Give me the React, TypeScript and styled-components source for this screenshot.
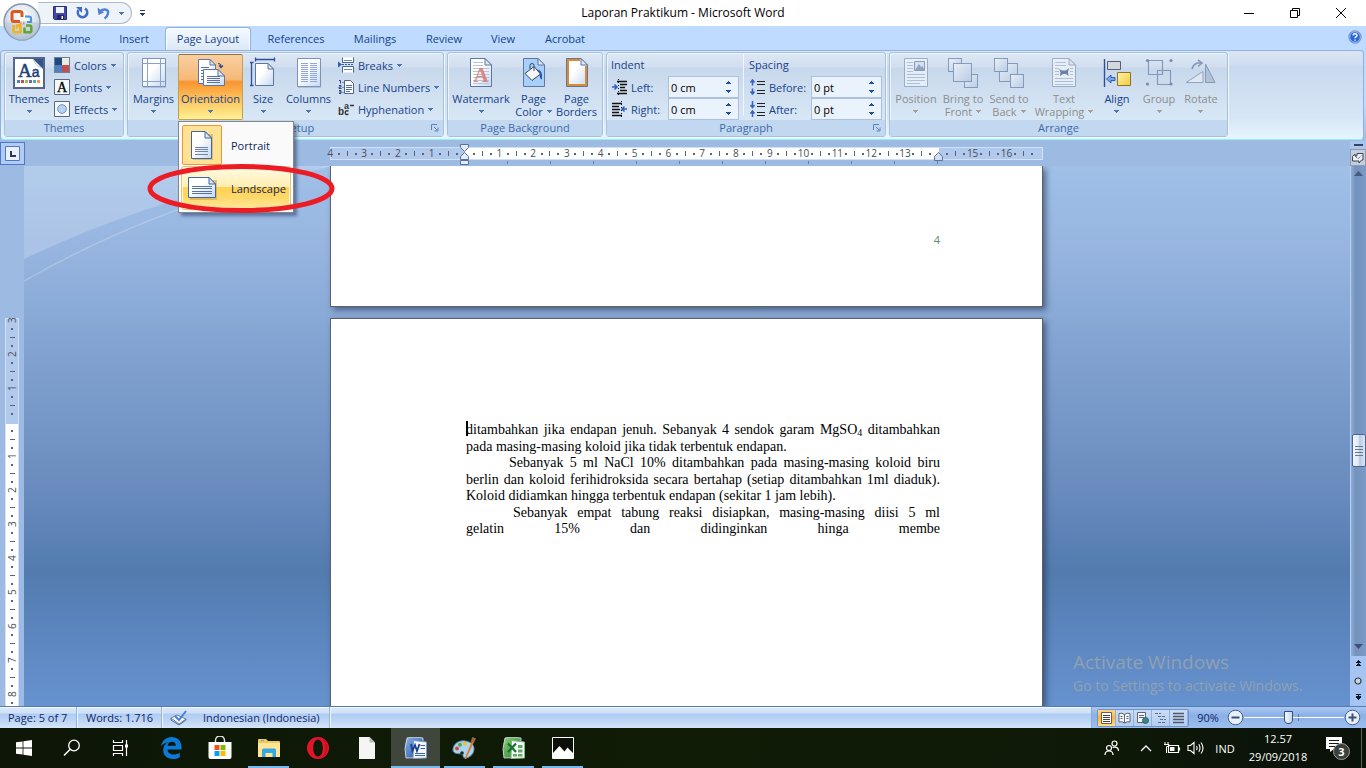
import React from 'react';
import styled, { createGlobalStyle, css } from 'styled-components';

const UI = '"Open Sans", "Segoe UI", sans-serif';
const NAVY = '#15428b';

const GlobalStyle = createGlobalStyle`
  *, *::before, *::after { box-sizing: border-box; }
  body { margin: 0; background: #0f1a08; font-family: ${UI}; font-size: 11px; color: ${NAVY}; }
  button, input { font: inherit; color: inherit; }
  button { background: none; border: 0; padding: 0; margin: 0; }
  svg { display: block; flex: none; }
`;

const Window = styled.div`
  display: flex;
  flex-direction: column;
  height: 100vh;
  min-height: 480px;
  overflow: hidden;
  position: relative;
`;

/* ---------- title bar ---------- */
const TitleBar = styled.header`
  flex: none;
  display: grid;
  grid-template-columns: 1fr auto 1fr;
  align-items: center;
  height: 26px;
  background: #fff;
  color: #000;
`;
const TitleLeft = styled.div`
  display: flex;
  align-items: center;
  height: 26px;
  padding-left: 38px;
`;
const QuickBar = styled.div`
  display: flex;
  align-items: center;
  gap: 8px;
  height: 22px;
  padding: 0 7px 0 14px;
  background: #eef3fa;
  border: 1px solid #aeb9c9;
  border-left-color: transparent;
  border-radius: 0 11px 11px 0;
`;
const QuickButton = styled.button`
  display: flex;
  align-items: center;
  justify-content: center;
  height: 18px;
`;
const MoreButton = styled(QuickButton)`
  width: 20px;
`;
const Title = styled.h1`
  margin: 0;
  font-size: 12px;
  font-weight: 400;
  line-height: 26px;
`;
const WindowButtons = styled.div`
  display: flex;
  justify-content: flex-end;
  padding-right: 2px;
`;
const WindowButton = styled.button`
  display: flex;
  align-items: center;
  justify-content: center;
  width: 46px;
  height: 24px;
`;
const OrbButton = styled.button`
  position: absolute;
  left: 3px;
  top: 3px;
  z-index: 3;
`;

/* ---------- tabs ---------- */
const TabRow = styled.nav`
  flex: none;
  display: flex;
  align-items: flex-end;
  height: 24px;
  padding: 0 4px 0 46px;
  background: #bfdbff;
`;
const Tab = styled.button<{ $w: number; $on?: boolean }>`
  width: ${p => p.$w}px;
  height: 23px;
  margin: 0 1px;
  line-height: 23px;
  white-space: nowrap;
  ${p => p.$on && css`
    border: 1px solid #8db2e3;
    border-bottom: 0;
    border-radius: 4px 4px 0 0;
    background: linear-gradient(#f4f9ff, #dce8f6);
    line-height: 22px;
    box-shadow: inset 1px 1px 0 #fff, inset -1px 0 0 #fff;
  `}
`;
const HelpButton = styled.button`
  margin: 0 0 6px auto;
`;

/* ---------- ribbon ---------- */
const Ribbon = styled.div`
  flex: none;
  display: flex;
  gap: 3px;
  height: 90px;
  margin: 0 2px 0 0;
  padding: 1px 2px 2px 3px;
  border: 1px solid #8db2e3;
  border-bottom: 1px solid #8ff0fb;
  border-radius: 4px;
  background: linear-gradient(#dbe6f4 0, #cfddef 16%, #c9d9ed 17%, #d6e6f6 75%, #e7f5ff 100%);
`;
const RibbonShell = styled.div`
  flex: none;
  background: linear-gradient(#bfdbff 60%, #9ebbe0);
  padding-bottom: 1px;
`;
const Group = styled.section<{ $w: number }>`
  display: flex;
  flex-direction: column;
  width: ${p => p.$w}px;
  border: 1px solid #a5c2de;
  border-radius: 3px;
  box-shadow: inset 1px 1px 0 #ecf3fb, 1px 1px 0 #eff6fd;
  background: linear-gradient(#dde8f5 0, #d1deef 17%, #c8d8ec 18%, #d8e7f5 80%);
`;
const GroupBody = styled.div`
  flex: 1;
  display: flex;
  padding: 1px 2px 0;
`;
const GroupTitle = styled.h2`
  position: relative;
  margin: 0;
  height: 16px;
  font-size: 11px;
  font-weight: 400;
  line-height: 16px;
  text-align: center;
  color: #3e6aaa;
  background: #c1d8f0;
`;
const Launcher = styled.button`
  position: absolute;
  right: 4px;
  top: 4px;
`;
const BigButton = styled.button<{ $w: number; $state?: 'open' | 'off' }>`
  display: flex;
  flex-direction: column;
  align-items: center;
  flex: none;
  width: ${p => p.$w}px;
  height: 66px;
  padding-top: 3px;
  line-height: 13px;
  white-space: nowrap;
  ${p => p.$state === 'off' && css`
    color: #8d8d8d;
    & > svg:first-child { opacity: 0.75; }
  `}
  ${p => p.$state === 'open' && css`
    padding-top: 2px;
    border: 1px solid #c2a04c;
    border-top-color: #8e6f44;
    border-radius: 2px;
    background: linear-gradient(#f9cfa0 0, #f6b978 38%, #f8942f 42%, #fbb752 62%, #fde583 92%, #fff0a0 100%);
  `}
`;
const BigLabel = styled.span`
  margin-top: 3px;
  display: flex;
  flex-direction: column;
  align-items: center;
`;
const LabelLine = styled.span`
  display: flex;
  align-items: center;
  justify-content: center;
  gap: 4px;
  height: 13px;
`;
const SmallStack = styled.div`
  display: flex;
  flex-direction: column;
  margin-left: 3px;
`;
const SmallButton = styled.button`
  display: flex;
  align-items: center;
  gap: 4px;
  height: 22px;
  white-space: nowrap;
`;
const MenuAnchor = styled.div`
  position: relative;
  margin: 0 1px;
`;
const Menu = styled.div`
  position: absolute;
  left: 0;
  top: 67px;
  z-index: 5;
  width: 116px;
  height: 92px;
  padding: 2px;
  border: 1px solid #868686;
  background: #fafafa;
  box-shadow: 3px 3px 3px rgba(30, 50, 90, 0.5);
  color: #0d1f63;
`;
const MenuItem = styled.button<{ $hot?: boolean }>`
  display: flex;
  align-items: center;
  gap: 9px;
  width: 100%;
  height: ${p => (p.$hot ? 44 : 42)}px;
  padding: 0;
  ${p => p.$hot && css`
    border: 1px solid #d9c48a;
    border-radius: 3px;
    box-shadow: inset 0 0 0 1px #fff6d2;
    background: linear-gradient(#fffbe4 0, #ffeeb0 47%, #ffd24f 49%, #ffd766 70%, #ffe79c 100%);
  `}
`;
const MenuIcon = styled.span<{ $on?: boolean }>`
  display: flex;
  align-items: center;
  justify-content: center;
  width: 40px;
  height: 40px;
  margin-left: ${p => (p.$on ? 1 : 0)}px;
  ${p => p.$on && css`
    border: 1px solid #f29536;
    border-radius: 2px;
    background: #ffe294;
  `}
`;
const Callout = styled.svg`
  position: absolute;
  left: -32px;
  top: 109px;
  z-index: 6;
  pointer-events: none;
`;

/* ---------- paragraph fields ---------- */
const FieldColumn = styled.div<{ $rule?: boolean }>`
  padding: 0 ${p => (p.$rule ? 4 : 0)}px 0 2px;
  margin-right: ${p => (p.$rule ? 3 : 0)}px;
  height: 62px;
  border-right: ${p => (p.$rule ? '1px solid #eef5fd' : '0')};
`;
const FieldHead = styled.div`
  height: 22px;
  line-height: 22px;
`;
const FieldRow = styled.label<{ $w: number }>`
  display: grid;
  grid-template-columns: 20px ${p => p.$w}px 71px;
  align-items: center;
  height: 22px;
`;
const Spinner = styled.span`
  display: flex;
  align-items: center;
  height: 22px;
  border: 1px solid #abc1de;
  background: #eaf2fb;
`;
const FieldInput = styled.input`
  width: 57px;
  height: 18px;
  padding: 0 0 0 2px;
  border: 0;
  background: none;
  color: #000;
  outline: none;
`;

/* ---------- workspace ---------- */
const Workspace = styled.main`
  flex: 1;
  min-height: 0;
  display: grid;
  grid-template-columns: 24px 1fr 16px;
  grid-template-rows: 25px 1fr;
  background: #9cbae2;
`;
const TabStop = styled.button`
  display: flex;
  align-items: center;
  justify-content: center;
  width: 25px;
  height: 23px;
  margin-top: 1px;
  border: 1px solid #4b79cd;
  background: #b3cbee;
`;
const HRulerWrap = styled.div`
  display: flex;
  flex-direction: column;
  align-items: center;
  padding: 6px 1px 0 0;
`;
const HRuler = styled.div`
  position: relative;
  width: 713px;
  height: 13px;
  border: 1px solid #cfe0f7;
  background: linear-gradient(90deg, #b0c9ec 134px, #fff 134px, #fff 608px, #b0c9ec 608px);
`;
const HCells = styled.div`
  display: grid;
  grid-template-columns: repeat(84, 1fr);
  height: 11px;
  margin: 0 6px 0 -5px;
`;
const Cell = styled.span`
  display: flex;
  align-items: center;
  justify-content: center;
  width: 0;
  justify-self: center;
  font-size: 10px;
  line-height: 11px;
  color: #4b4f57;
`;
const Dot = styled.i`
  flex: none;
  width: 2px;
  height: 2px;
  background: #5c6470;
`;
const Tick = styled.i<{ $v?: boolean }>`
  flex: none;
  width: ${p => (p.$v ? 5 : 1)}px;
  height: ${p => (p.$v ? 1 : 5)}px;
  background: #5c6470;
`;
const StopRow = styled.div`
  display: grid;
  grid-template-columns: repeat(11, 1fr);
  width: 474px;
  height: 3px;
  margin-left: 30px;
  margin-top: 1px;
`;
const Stop = styled.i`
  border-right: 1px solid #6d7f9e;
`;
const Marker = styled.svg<{ $x: number; $y: number }>`
  position: absolute;
  left: ${p => p.$x}px;
  top: ${p => p.$y}px;
`;
const SplitCell = styled.div`
  display: flex;
  flex-direction: column;
  align-items: center;
  gap: 3px;
  padding-top: 3px;
  background: #a9c6f0;
`;
const SplitBar = styled.i`
  width: 9px;
  height: 2px;
  background: #3b4260;
`;
const ObjectButton = styled.button`
  display: flex;
  align-items: center;
  justify-content: center;
  width: 16px;
  height: 17px;
  border: 1px solid #8d9bb3;
  background: #c6ccd8;
`;
const VRulerWrap = styled.div`
  overflow: hidden;
  min-height: 0;
  padding: 152px 5px 0;
`;
const VRuler = styled.div`
  height: 600px;
  padding: 0;
  border: 1px solid #cfe0f7;
  background: linear-gradient(#b0c9ec 105px, #fff 105px);
`;
const VUnit = styled.div`
  display: grid;
  grid-template-rows: repeat(4, 1fr);
  height: 34px;
  margin-top: -3px;
  margin-bottom: 3px;
  justify-items: center;
  align-items: center;
`;
const VNumber = styled.span`
  height: 8px;
  font-size: 10px;
  line-height: 8px;
  color: #4b4f57;
  writing-mode: vertical-rl;
  transform: rotate(180deg);
  display: flex;
  align-items: center;
  justify-content: center;
`;
const Canvas = styled.div`
  position: relative;
  min-height: 0;
  overflow: hidden;
  display: flex;
  flex-direction: column;
  align-items: center;
  gap: 11px;
  padding-right: 1px;
  background: linear-gradient(#a0c0e8 0, #96b4df 16%, #84a5d3 32%, #6d8fc0 56%, #6487ba 64%, #537bae 75%, #5a84bc 85%, #6692cf 100%);
`;
const Swoosh = styled.svg`
  position: absolute;
  left: 0;
  top: 0;
`;
const Page = styled.article<{ $tail?: boolean }>`
  position: relative;
  flex: ${p => (p.$tail ? 'none' : '1 0 388px')};
  width: 713px;
  padding: ${p => (p.$tail ? '66px 102px 58px' : '102px 102px 0 135px')};
  border: 1px solid #5e6066;
  border-top: ${p => (p.$tail ? '0' : '1px solid #5e6066')};
  border-bottom: ${p => (p.$tail ? '1px solid #5e6066' : '0')};
  background: #fff;
  box-shadow: 3px 3px 6px rgba(30, 50, 80, 0.6);
`;
const Folio = styled.p`
  margin: 0;
  font-size: 11px;
  line-height: 16px;
  text-align: right;
  color: #5b8a72;
`;
const Line = styled.p<{ $indent?: number; $natural?: boolean }>`
  margin: 0;
  padding-left: ${p => p.$indent || 0}px;
  height: 17px;
  font-family: "Liberation Serif", "Times New Roman", serif;
  font-size: 14px;
  line-height: 17px;
  white-space: nowrap;
  color: #000;
  text-align: ${p => (p.$natural ? 'left' : 'justify')};
  text-align-last: ${p => (p.$natural ? 'left' : 'justify')};
  &:nth-of-type(even) { height: 16px; }
`;
const Sub = styled.sub`
  font-size: 10px;
  line-height: 0;
  vertical-align: -2px;
`;
const Caret = styled.i`
  position: absolute;
  left: 135px;
  top: 102px;
  width: 2px;
  height: 15px;
  background: #000;
`;
const Activation = styled.aside`
  position: absolute;
  right: 0;
  bottom: 9px;
  width: 277px;
  color: #9aa5ad;
  opacity: 0.85;
  font-size: 14px;
  line-height: 23px;
  white-space: nowrap;
`;
const ActivationHead = styled.p`
  margin: 0;
  font-size: 19px;
`;
const ActivationText = styled.p`
  margin: 0;
`;
const Scroll = styled.div`
  display: flex;
  flex-direction: column;
  min-height: 0;
`;
const Track = styled.div`
  flex: 1;
  display: flex;
  flex-direction: column;
  justify-content: space-between;
  align-items: center;
  padding: 5px 0 7px;
  border-left: 1px solid #b5cdef;
  background: linear-gradient(90deg, #8fadd6, #7393bd 30%, #7b9ac6);
`;
const Thumb = styled.div`
  display: flex;
  flex-direction: column;
  justify-content: center;
  align-items: center;
  gap: 2px;
  width: 14px;
  height: 33px;
  margin-top: 81px;
  border: 1px solid #4f6596;
  border-radius: 2px;
  background: linear-gradient(90deg, #f2f6fb, #dfe8f3 45%, #b9cbe2 55%, #dbe6f3);
`;
const Grip = styled.i`
  width: 8px;
  height: 1px;
  background: #68788f;
`;
const BrowseKeys = styled.div`
  display: flex;
  flex-direction: column;
  align-items: center;
  justify-content: space-between;
  height: 50px;
  padding: 4px 0 5px;
  background: #a5c4f1;
`;

/* ---------- status bar ---------- */
const StatusBar = styled.footer`
  flex: none;
  display: flex;
  align-items: center;
  height: 22px;
  border-top: 1px solid #567db1;
  box-shadow: inset 0 1px 0 #f4f9ff;
  background: linear-gradient(#dbe8fa 0, #cfe0f8 30%, #adcbf2 32%, #c3d9f6 75%, #d6e5fa 100%);
  color: #0f2668;
  white-space: nowrap;
`;
const StatusItem = styled.button<{ $w: number; $pad: number }>`
  display: flex;
  align-items: center;
  gap: 16px;
  width: ${p => p.$w}px;
  height: 21px;
  padding-left: ${p => p.$pad}px;
  border-right: 1px solid #94b3df;
  box-shadow: 1px 0 0 #eff5fe;
`;
const StatusRight = styled.div`
  display: flex;
  align-items: center;
  height: 21px;
  margin-left: auto;
  padding: 0 5px 0 5px;
  border-left: 1px solid #8aabd9;
  background: linear-gradient(#a9c8f2, #8cb1e6 40%, #9dbeee);
`;
const ViewButtons = styled.div`
  display: flex;
  height: 18px;
  border: 1px solid #6f93c8;
  border-radius: 2px;
`;
const ViewButton = styled.button<{ $on?: boolean }>`
  display: flex;
  align-items: center;
  justify-content: center;
  width: 18px;
  height: 16px;
  background: ${p => (p.$on ? 'linear-gradient(#ffd592, #ffb03d 50%, #ffe08a)' : 'linear-gradient(#c9ddf6, #b4cdf0)')};
  border-right: 1px solid #90b0de;
`;
const ZoomLabel = styled.button`
  width: 38px;
  text-align: center;
`;
const ZoomButton = styled.button`
  width: 17px;
  height: 17px;
`;
const ZoomRange = styled.input`
  appearance: none;
  width: 100px;
  height: 16px;
  margin: 0;
  background: linear-gradient(#fff, #fff) center / 100% 1px no-repeat, linear-gradient(#5d7fb4, #5d7fb4) 54px center / 1px 7px no-repeat;
  &::-webkit-slider-thumb {
    appearance: none;
    width: 9px;
    height: 13px;
    border: 1px solid #33507f;
    border-radius: 1px 1px 5px 5px;
    background: linear-gradient(90deg, #f4f8fd, #c7d8ee);
  }
`;

/* ---------- taskbar ---------- */
const Taskbar = styled.nav`
  flex: none;
  display: flex;
  height: 40px;
  background: linear-gradient(90deg, #0d1607, #101c06 50%, #0e1907 80%, #0a1109);
  color: #fff;
`;
const TaskButton = styled.button<{ $w?: number; $state?: 'running' | 'active' }>`
  display: flex;
  align-items: center;
  justify-content: center;
  width: ${p => p.$w || 49}px;
  height: 40px;
  ${p => p.$state && css`
    background: linear-gradient(#76b9ed, #76b9ed) bottom center / ${p.$state === 'active' ? 49 : 41}px 2px no-repeat
      ${p.$state === 'active' ? ', #3f463b' : ''};
  `}
`;
const Apps = styled.div`
  display: flex;
  margin-left: 2px;
`;
const Tray = styled.div`
  display: flex;
  align-items: center;
  margin-left: auto;
`;
const TrayButton = styled.button<{ $w: number }>`
  display: flex;
  align-items: center;
  justify-content: center;
  width: ${p => p.$w}px;
  height: 40px;
`;
const Clock = styled.button`
  width: 72px;
  height: 40px;
  line-height: 18px;
  text-align: center;
`;
const PeekEdge = styled.i`
  width: 5px;
  height: 40px;
  border-left: 1px solid #5c6354;
`;

/* ---------- icons ---------- */
const Down = ({ c = '#4a76b8' }: { c?: string }) => (
  <svg width="5" height="3" viewBox="0 0 5 3" shapeRendering="crispEdges"><path d="M0 0h5v1h-1v1h-1v1h-1v-1h-1v-1h-1z" fill={c} /></svg>
);

const SheetShape = ({ x = 0, y = 0, w = 22, h = 28, fold = 7, fill = 'url(#paper)', stroke = '#5f779f' }) => (
  <g transform={`translate(${x} ${y})`}>
    <path d={`M.5 .5H${w - fold}L${w - 0.5} ${fold}V${h - 0.5}H.5Z`} fill={fill} stroke={stroke} />
    <path d={`M${w - fold} .5V${fold}H${w - 0.5}Z`} fill="#dbe6f6" stroke={stroke} />
  </g>
);

const PaperDefs = () => (
  <svg width="0" height="0" style={{ position: 'absolute' }} aria-hidden="true">
    <defs>
      <linearGradient id="paper" x1="0" y1="0" x2="1" y2="1">
        <stop offset="0.4" stopColor="#fff" />
        <stop offset="1" stopColor="#c3d7f4" />
      </linearGradient>
      <linearGradient id="tile" x1="0" y1="0" x2="1" y2="1">
        <stop offset="0" stopColor="#f1f5fb" />
        <stop offset="1" stopColor="#b4c8e3" />
      </linearGradient>
      <radialGradient id="orb" cx="0.5" cy="0.35" r="0.65">
        <stop offset="0" stopColor="#fff" />
        <stop offset="0.55" stopColor="#e2e8f1" />
        <stop offset="1" stopColor="#aab9ce" />
      </radialGradient>
      <linearGradient id="gold" x1="0" y1="0" x2="1" y2="1">
        <stop offset="0" stopColor="#fff3a8" />
        <stop offset="1" stopColor="#f3ca3c" />
      </linearGradient>
      <linearGradient id="wordblue" x1="0" y1="0" x2="1" y2="1">
        <stop offset="0" stopColor="#8fb2e6" />
        <stop offset="1" stopColor="#1e4b9e" />
      </linearGradient>
      <linearGradient id="xlgreen" x1="0" y1="0" x2="1" y2="1">
        <stop offset="0" stopColor="#8fd07b" />
        <stop offset="1" stopColor="#1f7a2e" />
      </linearGradient>
    </defs>
  </svg>
);

const lines = (x1: number, x2: number, ys: number[]) => ys.map(y => `M${x1} ${y}.5H${x2}`).join('');

const OrbIcon = () => (
  <svg width="38" height="38" viewBox="0 0 38 38">
    <circle cx="19" cy="19" r="18" fill="url(#orb)" stroke="#8494ab" strokeWidth="1.4" />
    <path d="M1.8 20a17.2 17.2 0 0 0 34.4 0q-17-4-34.4 0z" fill="#b7c5d9" opacity="0.55" />
    <g fill="none" strokeLinejoin="round">
      <path d="M17 18.500H11q-2 0-2-2V10.500q0-2 2-2h6q2 0 2 2V14" stroke="#dd5a1f" strokeWidth="3" />
      <path d="M22 13.500h4q2 0 2 2V19h-4" stroke="#4b92d8" strokeWidth="2.200" />
      <path d="M10.500 22v5.500q0 1.800 1.800 1.800H17.500V22.500H14v3" stroke="#f0b31c" strokeWidth="2.600" />
      <path d="M23 22.500h3.500q1.800 0 1.800 1.800v3.200q0 1.800-1.800 1.800H21.500V24.500" stroke="#62a52f" strokeWidth="2.600" />
    </g>
    <path d="M17 20.500h1.500M20 20.500h1.500" stroke="#e8862f" strokeWidth="2" />
  </svg>
);
const SaveIcon = () => (
  <svg width="14" height="14" viewBox="0 0 14 14">
    <path d="M.5 .5h13v13H1.500l-1-1z" fill="#4348a5" stroke="#2b2f7c" />
    <path d="M3 1h8v6H3z" fill="#eef3ff" />
    <path d="M4 9h7v4.500H4z" fill="#23266a" />
    <path d="M8.500 10h1.500v3H8.500z" fill="#fff" />
  </svg>
);
const RepeatIcon = () => (
  <svg width="14" height="14" viewBox="0 0 14 14">
    <path d="M10 2.500A4.700 4.700 0 1 1 3.500 4" fill="none" stroke="#3e6cc9" strokeWidth="2.600" />
    <path d="M1 1h6v6z" fill="#3e6cc9" />
  </svg>
);
const UndoIcon = () => (
  <svg width="14" height="14" viewBox="0 0 14 14">
    <path d="M3 5.500C7 2 12 3.500 11 7.500 10.500 10 9 11.500 7.500 12.500" fill="none" stroke="#4f7fd6" strokeWidth="2.400" />
    <path d="M.5 1.500L1.500 9 7 6.500z" fill="#4f7fd6" />
  </svg>
);
const HelpIcon = () => (
  <svg width="14" height="14" viewBox="0 0 14 14">
    <circle cx="7" cy="7" r="6.300" fill="#2a66d4" stroke="#8ba6d2" />
    <circle cx="7" cy="7" r="5.300" fill="none" stroke="#cfe0fb" strokeWidth="0.700" />
    <path d="M5 5.500Q5.200 3.800 7 3.800T9 5.400Q9 6.400 7.800 7 7 7.500 7 8.300M7 9.400V10.700" fill="none" stroke="#fff" strokeWidth="1.400" />
  </svg>
);
const ThemesIcon = () => (
  <svg width="32" height="32" viewBox="0 0 32 32">
    <path d="M1 1h30v30H1z" fill="#fff" stroke="#56678a" strokeWidth="2" />
    <path d="M20 2h10v10z" fill="#34548f" />
    <path d="M21 3q1 6 8 8" fill="none" stroke="#b9cbe6" />
    <text x="5" y="20" fontFamily="Liberation Serif, serif" fontSize="19" fill="#1f3f77" stroke="#1f3f77" strokeWidth="0.500">A<tspan fontFamily="Liberation Sans, sans-serif" fontSize="14">a</tspan></text>
    {['#4f81bd', '#c0504d', '#9bbb59', '#8064a2', '#4bacc6', '#f79646'].map((c, i) => (
      <path key={c} d={`M${4 + i * 4} 23h3v3h-3z`} fill={c} />
    ))}
  </svg>
);
const ColorsIcon = () => (
  <svg width="16" height="16" viewBox="0 0 16 16" shapeRendering="crispEdges">
    <path d="M0 0h16v16H0z" fill="#6b7f9f" />
    <path d="M1 1h7v7H1z" fill="#1f497d" /><path d="M8 1h7v7H8z" fill="#eeece1" />
    <path d="M1 8h7v7H1z" fill="#4f81bd" /><path d="M8 8h7v7H8z" fill="#c0504d" />
  </svg>
);
const FontsIcon = () => (
  <svg width="16" height="16" viewBox="0 0 16 16">
    <path d="M.5 .5h15v15H.5z" fill="#f6f8fc" stroke="#56678a" />
    <text x="8" y="13" textAnchor="middle" fontFamily="Liberation Serif, serif" fontSize="14" fill="#000" stroke="#000" strokeWidth="0.300">A</text>
  </svg>
);
const EffectsIcon = () => (
  <svg width="16" height="16" viewBox="0 0 16 16">
    <path d="M.5 .5h15v15H.5z" fill="#f6f8fc" stroke="#56678a" />
    <circle cx="8" cy="8" r="4.300" fill="#b8d2f4" stroke="#6d8fca" />
  </svg>
);
const MarginsIcon = () => (
  <svg width="26" height="32" viewBox="0 0 26 32">
    <path d="M2 2h23v29H2z" fill="#8fa4c4" opacity="0.500" />
    <path d="M1.500 1.500h23v28h-23z" fill="url(#paper)" stroke="#7b93b8" />
    <path d="M6.500 2v27M19.500 2v27M2 6.500h22M2 24.500h22" stroke="#8aa3cb" />
  </svg>
);
const OrientationIcon = () => (
  <svg width="30" height="32" viewBox="0 0 30 32">
    <SheetShape x={2} y={2} w={18} h={25} fold={6} />
    <path d={lines(5, 13, [10, 13, 16, 19, 22])} stroke="#5d7098" />
    <SheetShape x={7} y={12} w={22} h={17} fold={7} />
    <path d={lines(11, 24, [19, 21, 23, 25])} stroke="#5d7098" />
    <path d="M22 6.500q3 0 3 3M23 8.500l2 2.200 2-2.200" fill="none" stroke="#2c4d85" strokeWidth="1.200" />
  </svg>
);
const SizeIcon = () => (
  <svg width="26" height="32" viewBox="0 0 26 32">
    <path d="M5.500 2.500H24M5.500 .5v4M24.500 .5v4M1.500 5V28M0 5.500h3.500M0 28.500h3.500" stroke="#2e4f9a" strokeWidth="1.300" />
    <SheetShape x={5} y={6} w={19} h={23} fold={6} />
  </svg>
);
const ColumnsIcon = () => (
  <svg width="26" height="32" viewBox="0 0 26 32">
    <path d="M2 2h23v29H2z" fill="#8fa4c4" opacity="0.500" />
    <path d="M1.500 1.500h23v28h-23z" fill="url(#paper)" stroke="#7b93b8" />
    <path d={lines(5, 12, [6, 8, 10, 12, 14, 16, 18, 20, 22, 24]) + lines(14, 21, [6, 8, 10, 12, 14, 16, 18, 20, 22, 24])} stroke="#8ea8dc" />
  </svg>
);
const BreaksIcon = () => (
  <svg width="16" height="16" viewBox="0 0 16 16">
    <path d="M4.500 .5V5.500H15.500V.5M4.500 15.500V9.500H15.500V15.500" fill="#fff" stroke="#4d648f" />
    <path d="M6 3.500h8M6 12.500h8" stroke="#6b86b8" />
    <path d="M0 4.500l4 3-4 3z" fill="#2e5cb8" /><path d="M4 7.500h12" stroke="#2e5cb8" strokeDasharray="2 1" />
  </svg>
);
const LineNumIcon = () => (
  <svg width="16" height="16" viewBox="0 0 16 16">
    <path d="M6.500 1.500h6l3 3v10h-9z" fill="#fff" stroke="#4d648f" />
    <path d="M8 6.500h6M8 8.500h6M8 10.500h6M8 12.500h4" stroke="#506fa5" />
    <path d="M1 1.500h1.500V4.500M1 6.500h2v1.500H1V9.500h2.500M1 11.500h2v3H1M1 13h2M5 3v1M5 8v1M5 13v1" fill="none" stroke="#2a4787" />
  </svg>
);
const HyphenIcon = () => (
  <svg width="16" height="16" viewBox="0 0 16 16">
    <text x="0" y="14" fontFamily="Liberation Sans, sans-serif" fontWeight="700" fontSize="10" fill="#333">b<tspan dy="-6" fontSize="9">a</tspan></text>
    <path d="M10.500 10.200q-3-1.200-3.200 1.400t3.200 1.600M12 4.500h4" fill="none" stroke="#333" strokeWidth="1.400" />
  </svg>
);
const WatermarkIcon = () => (
  <svg width="24" height="32" viewBox="0 0 24 32">
    <SheetShape x={1} y={1} w={22} h={29} />
    <path d={lines(4, 14, [5, 8]) + lines(4, 20, [11, 14, 17, 20, 23, 26])} stroke="#b9c4d8" />
    <text x="12" y="25" textAnchor="middle" fontFamily="Liberation Serif, serif" fontWeight="700" fontSize="21" fill="#d9776f" opacity="0.850">A</text>
  </svg>
);
const PageColorIcon = () => (
  <svg width="24" height="32" viewBox="0 0 24 32">
    <SheetShape x={1} y={1} w={22} h={29} fill="#a6d0fa" />
    <path d="M3 16.500l9-7 6.500 7.500-8.500 6.500z" fill="#f4f6fa" stroke="#39435a" />
    <path d="M8 12V8.500q0-2 2-2t2 2V14" fill="none" stroke="#39435a" />
    <path d="M15 12.500q6 0 5 10-3-1-2-6z" fill="#2455b5" />
  </svg>
);
const PageBordersIcon = () => (
  <svg width="24" height="32" viewBox="0 0 24 32">
    <SheetShape x={1} y={1} w={22} h={29} />
    <path d="M15 3H3V28H21V9" fill="none" stroke="#e08a2e" strokeWidth="2" />
  </svg>
);
const IndentIcon = ({ right }: { right?: boolean }) => (
  <svg width="17" height="16" viewBox="0 0 17 16">
    <path d={right ? 'M1 2.500h10M1 5.500h7M1 8.500h8M1 11.500h7M1 14.500h10' : 'M6 2.500h10M9 5.500h7M9 8.500h5M9 11.500h7M6 14.500h10'} stroke="#111" strokeWidth="1.600" />
    <path d={right ? 'M16 8H11M13.500 5.500L11 8l2.500 2.500' : 'M1 8h5M3.500 5.500L6 8 3.500 10.500'} fill="none" stroke="#2e5cc8" strokeWidth="1.500" />
    <path d={right ? 'M10.500 0v16' : 'M7.500 0v16'} stroke="#111" strokeDasharray="1 2" />
  </svg>
);
const SpacingIcon = ({ after }: { after?: boolean }) => (
  <svg width="17" height="16" viewBox="0 0 17 16">
    <path d="M8 2.500h8M8 5.500h8M8 11.500h8M8 14.500h8" stroke="#222" />
    <path d={after ? 'M3.500 0v6M1.500 4l2 2.500L5.500 4M3.500 16v-5.500M1.500 12.500l2-2.500 2 2.500' : 'M3.500 6.500V1M1.500 3.500l2-2.500 2 2.500M3.500 9.500V15M1.500 12.500l2 2.500 2-2.500'} fill="none" stroke="#3563c4" strokeWidth="1.500" />
  </svg>
);
const PositionIcon = () => (
  <svg width="26" height="32" viewBox="0 0 26 32">
    <path d="M1.500 1.500h23v28h-23z" fill="#eef3fa" stroke="#8a9cba" />
    <path d={lines(4, 10, [5, 8, 11, 14]) + lines(4, 22, [17, 20, 23]) + lines(4, 17, [26])} stroke="#a6b6d0" />
    <path d="M11.500 4.500h10v9h-10z" fill="#d5e0ef" stroke="#6f84a8" />
    <path d="M12 13l4-6 2 3 1.500-1 2 4z" fill="#7d92b5" />
  </svg>
);
const Tile = ({ x, y, s }: { x: number; y: number; s: number }) => (
  <rect x={x + 0.5} y={y + 0.5} width={s} height={s} fill="url(#tile)" stroke="#6e83a8" />
);
const FrontIcon = () => (
  <svg width="32" height="32" viewBox="0 0 32 32"><Tile x={1} y={1} s={13} /><Tile x={17} y={17} s={13} /><Tile x={6} y={6} s={18} /></svg>
);
const BackIcon = () => (
  <svg width="32" height="32" viewBox="0 0 32 32"><Tile x={6} y={6} s={18} /><Tile x={1} y={1} s={13} /><Tile x={17} y={17} s={13} /></svg>
);
const WrapIcon = () => (
  <svg width="26" height="32" viewBox="0 0 26 32">
    <SheetShape x={1} y={1} w={24} h={29} stroke="#8a9cba" fill="#eef3fa" />
    <path d={lines(4, 15, [5, 8]) + lines(4, 8, [11, 14, 17]) + lines(19, 22, [11, 14, 17]) + lines(4, 22, [21, 24, 27])} stroke="#a6b6d0" />
    <path d="M8 12l3 1.500h4l3-2.500-1 4 .5 4-2.500-2h-3l-3 2 .5-4z" fill="#4e6388" />
  </svg>
);
const AlignIcon = () => (
  <svg width="28" height="32" viewBox="0 0 28 32">
    <path d="M1.500 2V30" stroke="#2c4f9b" strokeWidth="1.400" />
    <path d="M4.500 4.500h13v8h-13z" fill="#d4d8de" stroke="#56606f" />
    <path d="M14.500 15.500h13v13h-13z" fill="url(#gold)" stroke="#8e7423" />
    <path d="M12 20.500H8v-2.500l-4.500 4 4.500 4v-2.500h4z" fill="#7fa6e6" stroke="#2e5cb8" />
  </svg>
);
const GroupIcon = () => (
  <svg width="28" height="32" viewBox="0 0 28 32">
    <path d="M3.500 3.500h14v14h-14zM12.500 13.500h13v14h-13z" fill="none" stroke="#6e83a8" strokeWidth="1.200" />
    <g fill="#5a7099"><circle cx="2.500" cy="3.500" r="1.600" /><circle cx="26" cy="3.500" r="1.600" /><circle cx="2.500" cy="27" r="1.600" /><circle cx="26" cy="27" r="1.600" /></g>
  </svg>
);
const RotateIcon = () => (
  <svg width="32" height="32" viewBox="0 0 32 32">
    <path d="M1 25.500L18 14.500V25.500z" fill="#e6ecf5" stroke="#7d90b0" />
    <path d="M20.500 7V25.500H30z" fill="#a9b9d1" stroke="#6e83a8" />
    <path d="M7 12q2-7 9-6M13 3l4 3-4 3.500" fill="none" stroke="#6e83a8" strokeWidth="1.600" />
  </svg>
);
const LaunchIcon = () => (
  <svg width="8" height="8" viewBox="0 0 8 8"><path d="M.5 6V.5H6M3 3l3 3M7 3.500V7H3.500" fill="none" stroke="#5b82b8" /></svg>
);
const PortraitIcon = () => (
  <svg width="24" height="30" viewBox="0 0 24 30">
    <path d="M3 4h20v26H3z" fill="#b89a54" opacity="0.500" />
    <SheetShape x={1} y={1} w={21} h={28} stroke="#41669e" />
    <path d={lines(5, 18, [17, 19, 21, 24])} stroke="#6b83b3" />
  </svg>
);
const LandscapeIcon = () => (
  <svg width="30" height="24" viewBox="0 0 30 24">
    <path d="M3 4h27v20H3z" fill="#b89a54" opacity="0.500" />
    <SheetShape x={1} y={1} w={28} h={21} stroke="#41669e" />
    <path d={lines(5, 25, [10, 12, 15, 17])} stroke="#5670a8" />
  </svg>
);
const CornerIcon = () => (
  <svg width="15" height="15" viewBox="0 0 15 15">
    <path d="M.5 .5h14v14H.5z" fill="#e9f0fb" stroke="#4b79cd" />
    <path d="M6 5v5h5" fill="none" stroke="#2d3a57" strokeWidth="2" />
  </svg>
);
const BrowseObjectIcon = () => (
  <svg width="12" height="12" viewBox="0 0 12 12">
    <path d="M.5 4.500L3 2v2h2V1.500h6V8H9.500l-2.500 3V9H.5z" fill="#f1eef5" stroke="#33475f" />
    <path d="M3 4l3 3 4-4" fill="none" stroke="#33475f" strokeDasharray="1 1" />
  </svg>
);
const DoubleChevron = ({ down }: { down?: boolean }) => (
  <svg width="5" height="7" viewBox="0 0 5 7" shapeRendering="crispEdges">
    <path d={down ? 'M0 0h5v1H3v1h2v1H4v1H3v1H2V4H1V3H0V2h2V1H0zM0 3h5v1H4v1H3v1H2V5H1V4H0z' : 'M2 0h1v1h1v1h1v1H0V2h1V1h1zM2 3h1v1h1v1h1v1H0V5h1V4h1z'} fill="#10182e" />
  </svg>
);
const ProofIcon = () => (
  <svg width="17" height="16" viewBox="0 0 17 16">
    <path d="M1 8l6-3 9 4-7 5z" fill="#f3f6fb" stroke="#70809c" />
    <path d="M1 8v2l8 5 7-5V9" fill="none" stroke="#5c6f93" />
    <path d="M5 6l4 4L16 1" fill="none" stroke="#4d7fdc" strokeWidth="2" />
  </svg>
);
const ViewIcon = ({ kind }: { kind: number }) => (
  <svg width="13" height="12" viewBox="0 0 13 12">
    {kind === 0 && <><path d="M1.500 .5h10v11h-10z" fill="#fff" stroke="#6a6146" /><path d="M3 3.500h7M3 5.500h7M3 7.500h7M3 9.500h7" stroke="#444" /></>}
    {kind === 1 && <><path d="M1 1.500q3-1 5.500 1Q9 .500 12 1.500V10q-3-1-5.500 1Q4 9 1 10z" fill="#f4f7fb" stroke="#5f6570" /><path d="M6.500 2v9M2.500 4.500h2M2.500 6.500h2M8.500 4.500h2M8.500 6.500h2" stroke="#5f6570" /></>}
    {kind === 2 && <><path d="M1.500 .5h8v10h-8z" fill="#f4f7fb" stroke="#5f6570" /><path d="M3 3.500h5M3 5.500h5" stroke="#5f6570" /><circle cx="9.500" cy="8.500" r="3" fill="#3a8c63" stroke="#2c5ba8" /></>}
    {kind === 3 && <path d="M1 1.500h6M4 4.500h7M6 7.500h6M4 10.500h7" stroke="#5f6d83" strokeDasharray="3 1" />}
    {kind === 4 && <path d="M1 1.500h11M1 4.500h11M1 7.500h11M1 10.500h11" stroke="#4f5867" strokeWidth="1.300" />}
  </svg>
);
const RoundSign = ({ plus }: { plus?: boolean }) => (
  <svg width="17" height="17" viewBox="0 0 17 17">
    <circle cx="8.500" cy="8.500" r="7.300" fill="#e9f0fa" stroke="#3f5f95" />
    <path d={plus ? 'M4.500 8.500h8M8.500 4.500v8' : 'M4.500 8.500h8'} stroke="#3b4f77" strokeWidth="2" />
  </svg>
);

const StartIcon = () => (
  <svg width="16" height="16" viewBox="0 0 16 16" fill="#fff"><path d="M0 2.300l6.600-.9v6.200H0zM7.400 1.300L16 0v7.600H7.400zM0 8.400h6.600v6.200L0 13.700zM7.400 8.400H16V16l-8.600-1.300z" /></svg>
);
const SearchIcon = () => (
  <svg width="18" height="18" viewBox="0 0 18 18"><circle cx="11" cy="6.500" r="5.300" fill="none" stroke="#fff" strokeWidth="1.300" /><path d="M7.200 10.300L1 16.500" stroke="#fff" strokeWidth="1.500" /></svg>
);
const TaskViewIcon = () => (
  <svg width="17" height="16" viewBox="0 0 17 16"><path d="M1.500 0v2.500h9V0M1.500 5.500h9v5h-9zM1.500 16v-2.500h9V16M14.500 0v16" fill="none" stroke="#fff" strokeWidth="1.200" /><path d="M13 4.500h3v3h-3z" fill="#fff" /></svg>
);
const EdgeIcon = () => (
  <svg width="22" height="22" viewBox="0 0 22 22">
    <path d="M1 9.500C2 3.500 6.500 0 11.500 0 17.500 0 21.500 4 21.500 10v2.500H7.500c.2 3.500 3 5 6 5 2.300 0 4.500-.7 6.300-1.800v4.500C17.800 21.500 15.500 22 13 22 7 22 3.200 18.300 3.200 13c0-3.400 2-6.300 5-7.700C5.300 5.500 2.600 7 1 9.500zM7.600 8.700h8.200c0-2.500-1.300-4-3.900-4-2.400 0-4 1.500-4.300 4z" fill="#0a7ad8" />
  </svg>
);
const StoreIcon = () => (
  <svg width="24" height="24" viewBox="0 0 24 24">
    <path d="M7.500 6V4.500a4.500 4.500 0 0 1 9 0V6" fill="none" stroke="#e8e8e8" strokeWidth="1.400" />
    <path d="M.5 6h23v15q0 2-2 2h-19q-2 0-2-2z" fill="#fff" />
    <path d="M6.500 9h5v5h-5z" fill="#f25022" /><path d="M12.500 9h5v5h-5z" fill="#7fba00" />
    <path d="M6.500 15h5v5h-5z" fill="#00a4ef" /><path d="M12.500 15h5v5h-5z" fill="#ffb900" />
  </svg>
);
const FolderIcon = () => (
  <svg width="22" height="20" viewBox="0 0 22 20">
    <path d="M0 2q0-1 1-1h7l2 2h11q1 0 1 1v14H0z" fill="#f3ca58" /><path d="M1 5h21v14H0V5z" fill="#ffe594" />
    <path d="M4 19v-7q0-1.500 1.500-1.500h11q1.500 0 1.500 1.500v7h-3.500v-4h-7v4z" fill="#34a8e4" />
    <path d="M3 2.500h3" stroke="#4fb5e8" />
  </svg>
);
const OperaIcon = () => (
  <svg width="24" height="24" viewBox="0 0 24 24">
    <path fillRule="evenodd" d="M12 1a11 11 0 1 1 0 22 11 11 0 0 1 0-22zM12 3.500c-3 0-4.800 3.700-4.800 8.500s1.800 8.500 4.800 8.500 4.800-3.700 4.800-8.500S15 3.500 12 3.500z" fill="#e5142a" />
    <path d="M14.500 1.800q5 3 5 10.200t-5 10.200A11 11 0 0 0 14.500 1.800z" fill="#a50d1e" opacity="0.700" />
  </svg>
);
const FileIcon = () => (
  <svg width="16" height="22" viewBox="0 0 16 22"><path d="M0 0h10.500L16 5.500V22H0z" fill="#f5f5f5" /><path d="M10.500 0v5.500H16z" fill="#b9b9b9" /></svg>
);
const OfficeAppIcon = ({ kind }: { kind: 'word' | 'excel' }) => (
  <svg width="23" height="23" viewBox="0 0 23 23">
    <path d="M3 1q5-1.500 16 0v19q-9 1-17 1Q-.5 12 3 1z" fill={kind === 'word' ? 'url(#wordblue)' : 'url(#xlgreen)'} stroke="#d9e6f5" strokeWidth="0.800" />
    <path d="M9.500 3.500L22.500 5v16L9 21.500z" fill="#f5f9ff" stroke={kind === 'word' ? '#7b96c4' : '#7fb583'} />
    {kind === 'word'
      ? <><path d="M7 7l1.500 7 2.500-6 2 6L15.500 7" fill="none" stroke="#1c3f8f" strokeWidth="1.800" /><path d="M16.500 8.500h4.500M16.500 11.500h4.500M11 16.500h10M11 18.500h10" stroke="#3a62ae" strokeWidth="1.200" /></>
      : <><path d="M6 6.500l8 8.500M14 6.500L6 15" stroke="#16702a" strokeWidth="2.200" /><path d="M16 8h4.500v3H16zM16 12.500h4.500v3H16zM11 17h4v2.500h-4zM16 17h4.500v2.500H16z" fill="#5cae58" /></>}
  </svg>
);
const PaintIcon = () => (
  <svg width="25" height="24" viewBox="0 0 25 24">
    <path d="M1 14C1 8 7 4 13 5c6 .8 9 4 9 8 0 4.500-4 9-9 9-2 0-1.500-2-2.500-3.500S1 19 1 14z" fill="#a9d3ee" stroke="#5f8fb5" />
    <circle cx="5" cy="12.500" r="2" fill="#d8433b" /><circle cx="8" cy="8.800" r="2" fill="#53a844" /><circle cx="13" cy="7.500" r="2" fill="#f2c02c" />
    <circle cx="10" cy="17" r="1.800" fill="#1c2a18" />
    <path d="M12.500 23L20 5l2 1-8 17z" fill="#e07b2b" /><path d="M18.500 5.500L20.500 1 24 2.500l-2 4z" fill="#9a6a3d" />
  </svg>
);
const PhotosIcon = () => (
  <svg width="22" height="22" viewBox="0 0 22 22"><path d="M.5 .5h21v21H.5z" fill="#0a0f08" stroke="#fff" /><path d="M1 21v-5l6.500-7 5 5.500 3-4L21 16v5z" fill="#fff" /></svg>
);
const PeopleIcon = () => (
  <svg width="16" height="16" viewBox="0 0 16 16" fill="none" stroke="#fff" strokeWidth="1.200"><circle cx="10.500" cy="3.500" r="2.500" /><circle cx="5" cy="8" r="2.500" /><path d="M1 15q0-4 4-4t4 4M8.500 7.500Q14.500 6 14.500 11" /></svg>
);
const ChevronIcon = () => (
  <svg width="12" height="8" viewBox="0 0 12 8"><path d="M1 7l5-5 5 5" fill="none" stroke="#fff" strokeWidth="1.300" /></svg>
);
const BatteryIcon = () => (
  <svg width="17" height="12" viewBox="0 0 17 12"><path d="M4.500 3.500h10v7h-10zM15.500 5.500v3" fill="none" stroke="#fff" strokeWidth="1.200" /><path d="M6 5h4.500v4H6z" fill="#fff" /><path d="M1 0v2M4 0v2M0 2.500h5v2H2.500V11" fill="none" stroke="#fff" /></svg>
);
const SpeakerIcon = () => (
  <svg width="18" height="14" viewBox="0 0 18 14" fill="none" stroke="#fff" strokeWidth="1.100"><path d="M1 4.500h2.500L7 1.500v11L3.500 9.500H1zM9.500 5q1.200 2 0 4M11.800 3.200q2.400 3.800 0 7.600M14 1.500q4 5.500 0 11" /></svg>
);
const NoticeIcon = () => (
  <svg width="24" height="24" viewBox="0 0 24 24">
    <path d="M0 1h16v12H8l-4 3v-3H0z" fill="#fff" /><path d="M3 4.500h10M3 7.500h10M3 10.500h7" stroke="#10190a" />
    <circle cx="15.500" cy="15.500" r="8" fill="#3c403a" stroke="#9a9d98" />
    <text x="15.500" y="19.500" textAnchor="middle" fontFamily="Open Sans, sans-serif" fontWeight="700" fontSize="11" fill="#fff">3</text>
  </svg>
);

/* ---------- pieces ---------- */
type BigProps = { icon: React.ReactNode; w: number; label: string; second?: string; arrow?: boolean; state?: 'open' | 'off' };
const RibbonButton = ({ icon, w, label, second, arrow = true, state }: BigProps) => {
  const tint = state === 'off' ? '#a3a09c' : '#4a76b8';
  return (
    <BigButton $w={w} $state={state} disabled={state === 'off'}>
      {icon}
      <BigLabel>
        <LabelLine>{label}</LabelLine>
        <LabelLine>{second}{arrow && <Down c={tint} />}</LabelLine>
      </BigLabel>
    </BigButton>
  );
};

type FieldProps = { icon: React.ReactNode; label: string; value: string; w: number };
const SpinField = ({ icon, label, value, w }: FieldProps) => (
  <FieldRow $w={w}>
    {icon}
    <span>{label}</span>
    <Spinner>
      <FieldInput defaultValue={value} />
      <svg width="5" height="12" viewBox="0 0 5 12" shapeRendering="crispEdges">
        <path d="M2 0h1v1h1v1h1v1H0V2h1V1h1zM0 9h5v1H4v1H3v1H2v-1H1v-1H0z" fill="#1f4f9f" />
      </svg>
    </Spinner>
  </FieldRow>
);

const tabs: { name: string; w: number; on?: boolean }[] = [
  { name: 'Home', w: 56 }, { name: 'Insert', w: 58 }, { name: 'Page Layout', w: 86, on: true },
  { name: 'References', w: 86 }, { name: 'Mailings', w: 68 }, { name: 'Review', w: 66 },
  { name: 'View', w: 48 }, { name: 'Acrobat', w: 72 },
];

const mark = (i: number, n: number | string, v?: boolean) => {
  const k = i % 4;
  if (k === 0) return n;
  return k === 2 ? <Tick $v={v} /> : <Dot />;
};

export default function App() {
  return (
    <Window>
      <GlobalStyle />
      <PaperDefs />
      <OrbButton aria-label="Office Button"><OrbIcon /></OrbButton>
      <TitleBar>
        <TitleLeft>
          <QuickBar>
            <QuickButton aria-label="Save"><SaveIcon /></QuickButton>
            <QuickButton aria-label="Repeat"><RepeatIcon /></QuickButton>
            <QuickButton aria-label="Undo"><UndoIcon /></QuickButton>
            <QuickButton aria-label="Undo history"><Down /></QuickButton>
          </QuickBar>
          <MoreButton aria-label="Customize">
            <svg width="5" height="6" viewBox="0 0 5 6" shapeRendering="crispEdges"><path d="M0 0h5v1H0zM0 3h5v1H4v1H3v1H2V5H1V4H0z" fill="#223a66" /></svg>
          </MoreButton>
        </TitleLeft>
        <Title>Laporan Praktikum - Microsoft Word</Title>
        <WindowButtons>
          <WindowButton aria-label="Minimize"><svg width="10" height="10" viewBox="0 0 10 10"><path d="M0 5.500h10" stroke="#000" /></svg></WindowButton>
          <WindowButton aria-label="Restore"><svg width="10" height="10" viewBox="0 0 10 10"><path d="M.5 2.500h7v7h-7zM2.500 2.500v-2h7v7h-2" fill="none" stroke="#000" /></svg></WindowButton>
          <WindowButton aria-label="Close"><svg width="10" height="10" viewBox="0 0 10 10"><path d="M0 0l10 10M10 0L0 10" stroke="#000" /></svg></WindowButton>
        </WindowButtons>
      </TitleBar>

      <TabRow>
        {tabs.map(t => <Tab key={t.name} $w={t.w} $on={t.on}>{t.name}</Tab>)}
        <HelpButton aria-label="Help"><HelpIcon /></HelpButton>
      </TabRow>

      <RibbonShell>
        <Ribbon>
          <Group $w={120}>
            <GroupBody>
              <RibbonButton icon={<ThemesIcon />} w={44} label="Themes" />
              <SmallStack>
                <SmallButton><ColorsIcon />Colors<Down /></SmallButton>
                <SmallButton><FontsIcon />Fonts<Down /></SmallButton>
                <SmallButton><EffectsIcon />Effects<Down /></SmallButton>
              </SmallStack>
            </GroupBody>
            <GroupTitle>Themes</GroupTitle>
          </Group>

          <Group $w={317}>
            <GroupBody>
              <RibbonButton icon={<MarginsIcon />} w={47} label="Margins" />
              <MenuAnchor>
                <RibbonButton icon={<OrientationIcon />} w={65} label="Orientation" state="open" />
                <Menu>
                  <MenuItem><MenuIcon $on><PortraitIcon /></MenuIcon>Portrait</MenuItem>
                  <MenuItem $hot><MenuIcon><LandscapeIcon /></MenuIcon>Landscape</MenuItem>
                </Menu>
                <Callout width="190" height="51" viewBox="0 0 190 51">
                  <ellipse cx="95" cy="25.500" rx="91" ry="22" fill="none" stroke="#ed1c24" strokeWidth="5" />
                </Callout>
              </MenuAnchor>
              <RibbonButton icon={<SizeIcon />} w={38} label="Size" />
              <RibbonButton icon={<ColumnsIcon />} w={53} label="Columns" />
              <SmallStack>
                <SmallButton><BreaksIcon />Breaks<Down /></SmallButton>
                <SmallButton><LineNumIcon />Line Numbers<Down /></SmallButton>
                <SmallButton><HyphenIcon />Hyphenation<Down /></SmallButton>
              </SmallStack>
            </GroupBody>
            <GroupTitle>Page Setup<Launcher aria-label="Page Setup dialog"><LaunchIcon /></Launcher></GroupTitle>
          </Group>

          <Group $w={156}>
            <GroupBody>
              <RibbonButton icon={<WatermarkIcon />} w={62} label="Watermark" />
              <RibbonButton icon={<PageColorIcon />} w={43} label="Page" second="Color" />
              <RibbonButton icon={<PageBordersIcon />} w={43} label="Page" second="Borders" arrow={false} />
            </GroupBody>
            <GroupTitle>Page Background</GroupTitle>
          </Group>

          <Group $w={280}>
            <GroupBody>
              <FieldColumn $rule>
                <FieldHead>Indent</FieldHead>
                <SpinField icon={<IndentIcon />} label="Left:" value="0 cm" w={37} />
                <SpinField icon={<IndentIcon right />} label="Right:" value="0 cm" w={37} />
              </FieldColumn>
              <FieldColumn>
                <FieldHead>Spacing</FieldHead>
                <SpinField icon={<SpacingIcon />} label="Before:" value="0 pt" w={42} />
                <SpinField icon={<SpacingIcon after />} label="After:" value="0 pt" w={42} />
              </FieldColumn>
            </GroupBody>
            <GroupTitle>Paragraph<Launcher aria-label="Paragraph dialog"><LaunchIcon /></Launcher></GroupTitle>
          </Group>

          <Group $w={339}>
            <GroupBody>
              <RibbonButton icon={<PositionIcon />} w={48} label="Position" state="off" />
              <RibbonButton icon={<FrontIcon />} w={46} label="Bring to" second="Front" state="off" />
              <RibbonButton icon={<BackIcon />} w={46} label="Send to" second="Back" state="off" />
              <RibbonButton icon={<WrapIcon />} w={64} label="Text" second="Wrapping" state="off" />
              <RibbonButton icon={<AlignIcon />} w={42} label="Align" />
              <RibbonButton icon={<GroupIcon />} w={42} label="Group" state="off" />
              <RibbonButton icon={<RotateIcon />} w={42} label="Rotate" state="off" />
            </GroupBody>
            <GroupTitle>Arrange</GroupTitle>
          </Group>
        </Ribbon>
      </RibbonShell>

      <Workspace>
        <TabStop aria-label="Tab stop"><CornerIcon /></TabStop>
        <HRulerWrap>
          <HRuler>
            <HCells>
              {Array.from({ length: 84 }, (_, i) => {
                const n = i / 4 - 4;
                return <Cell key={i}>{n === 0 || n === 14 ? '' : mark(i, Math.abs(n))}</Cell>;
              })}
            </HCells>
            <Marker $x={129} $y={-4} width="10" height="22" viewBox="0 0 10 22">
              <path d="M.5 .5h8v3l-4 4-4-4zM.5 15.500v-3l4-4 4 4v3zM.5 16.500h8v4h-8z" fill="#e3ecf8" stroke="#5a7299" />
            </Marker>
            <Marker $x={603} $y={4} width="10" height="9" viewBox="0 0 10 9">
              <path d="M.5 8.500v-4l4-4 4 4v4z" fill="#d3deed" stroke="#5a7299" />
            </Marker>
          </HRuler>
          <StopRow>{Array.from({ length: 11 }, (_, i) => <Stop key={i} />)}</StopRow>
        </HRulerWrap>
        <SplitCell>
          <SplitBar />
          <ObjectButton aria-label="View ruler"><BrowseObjectIcon /></ObjectButton>
        </SplitCell>

        <VRulerWrap>
          <VRuler>
            {[3, 2, 1, 0, 1, 2, 3, 4, 5, 6, 7, 8].map((n, u) => (
              <VUnit key={u}>
                {[0, 1, 2, 3].map(i => <Cell key={i}>{i === 0 ? <VNumber>{n || ''}</VNumber> : mark(i, '', true)}</Cell>)}
              </VUnit>
            ))}
          </VRuler>
        </VRulerWrap>

        <Canvas>
          <Swoosh width="320" height="130" viewBox="0 0 320 130">
            <path d="M0 0H306Q150 22 0 93z" fill="#fff" opacity="0.200" />
            <path d="M0 115Q140 35 306 0" fill="none" stroke="#fff" strokeWidth="1.500" opacity="0.220" />
          </Swoosh>
          <Page $tail><Folio>4</Folio></Page>
          <Page>
            <Caret />
            <Line>ditambahkan jika endapan jenuh. Sebanyak 4 sendok garam MgSO<Sub>4</Sub> ditambahkan</Line>
            <Line $natural>pada masing-masing koloid jika tidak terbentuk endapan.</Line>
            <Line $indent={43}>Sebanyak 5 ml NaCl 10% ditambahkan pada masing-masing koloid biru</Line>
            <Line>berlin dan koloid ferihidroksida secara bertahap (setiap ditambahkan 1ml diaduk).</Line>
            <Line $natural>Koloid didiamkan hingga terbentuk endapan (sekitar 1 jam lebih).</Line>
            <Line $indent={47}>Sebanyak empat tabung reaksi disiapkan, masing-masing diisi 5 ml</Line>
            <Line>gelatin 15% dan didinginkan hinga membe</Line>
          </Page>
          <Activation>
            <ActivationHead>Activate Windows</ActivationHead>
            <ActivationText>Go to Settings to activate Windows.</ActivationText>
          </Activation>
        </Canvas>

        <Scroll>
          <Track>
            <svg width="9" height="5" viewBox="0 0 9 5"><path d="M4.500 0L9 5H0z" fill="#47597f" /></svg>
            <Thumb><Grip /><Grip /><Grip /><Grip /></Thumb>
            <svg width="9" height="5" viewBox="0 0 9 5"><path d="M0 0h9L4.500 5z" fill="#3f4f78" /></svg>
          </Track>
          <BrowseKeys>
            <DoubleChevron />
            <svg width="8" height="8" viewBox="0 0 8 8"><circle cx="4" cy="4" r="3" fill="#cfd3db" stroke="#333c50" strokeWidth="1.200" /></svg>
            <DoubleChevron down />
          </BrowseKeys>
        </Scroll>
      </Workspace>

      <StatusBar>
        <StatusItem $w={77} $pad={8}>Page: 5 of 7</StatusItem>
        <StatusItem $w={85} $pad={9}>Words: 1.716</StatusItem>
        <StatusItem $w={168} $pad={8}><ProofIcon />Indonesian (Indonesia)</StatusItem>
        <StatusRight>
          <ViewButtons>
            {[0, 1, 2, 3, 4].map(k => <ViewButton key={k} $on={k === 0} aria-label={`View ${k + 1}`}><ViewIcon kind={k} /></ViewButton>)}
          </ViewButtons>
          <ZoomLabel>90%</ZoomLabel>
          <ZoomButton aria-label="Zoom out"><RoundSign /></ZoomButton>
          <ZoomRange type="range" aria-label="Zoom" min={0} max={100} defaultValue={44} />
          <ZoomButton aria-label="Zoom in"><RoundSign plus /></ZoomButton>
        </StatusRight>
      </StatusBar>

      <Taskbar>
        <TaskButton $w={48} aria-label="Start"><StartIcon /></TaskButton>
        <TaskButton $w={48} aria-label="Search"><SearchIcon /></TaskButton>
        <TaskButton $w={48} aria-label="Task View"><TaskViewIcon /></TaskButton>
        <Apps>
          <TaskButton aria-label="Edge"><EdgeIcon /></TaskButton>
          <TaskButton aria-label="Store"><StoreIcon /></TaskButton>
          <TaskButton aria-label="File Explorer" $state="running"><FolderIcon /></TaskButton>
          <TaskButton aria-label="Opera"><OperaIcon /></TaskButton>
          <TaskButton aria-label="Document"><FileIcon /></TaskButton>
          <TaskButton aria-label="Word" $state="active"><OfficeAppIcon kind="word" /></TaskButton>
          <TaskButton aria-label="Paint" $state="running"><PaintIcon /></TaskButton>
          <TaskButton aria-label="Excel" $state="running"><OfficeAppIcon kind="excel" /></TaskButton>
          <TaskButton aria-label="Photos" $state="running"><PhotosIcon /></TaskButton>
        </Apps>
        <Tray>
          <TrayButton $w={40} aria-label="People"><PeopleIcon /></TrayButton>
          <TrayButton $w={28} aria-label="Show hidden icons"><ChevronIcon /></TrayButton>
          <TrayButton $w={24} aria-label="Battery"><BatteryIcon /></TrayButton>
          <TrayButton $w={24} aria-label="Volume"><SpeakerIcon /></TrayButton>
          <TrayButton $w={34}>IND</TrayButton>
          <Clock>12.57<br />29/09/2018</Clock>
          <TrayButton $w={47} aria-label="Notifications"><NoticeIcon /></TrayButton>
          <PeekEdge />
        </Tray>
      </Taskbar>
    </Window>
  );
}
